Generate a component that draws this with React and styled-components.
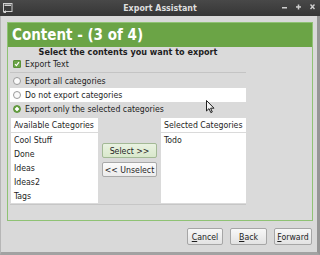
import React from 'react';
import styled, { createGlobalStyle, css } from 'styled-components';

const Global = createGlobalStyle`
  html, body {
    margin: 0;
    padding: 0;
    background: #d9d9d9;
    overflow: hidden;
  }
  body {
    font-family: "DejaVu Sans Condensed", "DejaVu Sans", sans-serif;
    font-stretch: condensed;
    font-size: 8.7px;
    color: #1e1e1e;
  }
`;

const Window = styled.div`
  position: relative;
  width: 320px;
  height: 255px;
  display: flex;
  flex-direction: column;
  background: #d9d9d9;
`;

const TitleBar = styled.div`
  position: relative;
  height: 16px;
  flex: none;
  display: flex;
  align-items: center;
  justify-content: center;
  background: linear-gradient(#484848, #363636);
  color: #dedede;
  font-weight: bold;
  font-size: 8.8px;
`;

const WinIcon = styled.svg`
  position: absolute;
  left: 3px;
  top: 3px;
`;

const Controls = styled.div`
  position: absolute;
  right: 5px;
  top: 4px;
  display: flex;
  gap: 9px;
`;

const Frame = styled.div`
  flex: 1;
  display: flex;
  flex-direction: column;
  padding: 6px 5px 0 6px;
  border-left: 1px solid #b6b6b6;
  border-right: 3px solid #959595;
  border-bottom: 3px solid #a2a2a2;
`;

const Panel = styled.div`
  width: 306px;
  height: 199px;
  box-sizing: border-box;
  border: 1px solid #8fc274;
  background: #dadada;
  display: flex;
  flex-direction: column;
`;

const Header = styled.div`
  height: 24px;
  line-height: 24px;
  background: #6ba446;
  color: #fff;
  font-weight: bold;
  font-size: 15px;
  padding-left: 4px;
`;

const Content = styled.div`
  width: 236px;
  margin-left: 2px;
  display: flex;
  flex-direction: column;
`;

const Heading = styled.div`
  height: 10px;
  line-height: 10px;
  text-align: center;
  font-weight: bold;
  font-size: 9px;
`;

const OptionRow = styled.div`
  height: 14px;
  display: flex;
  align-items: center;
  gap: 4px;
  padding-left: 3px;
  ${(p) =>
    p.hover &&
    css`
      background: #ffffff;
    `}
`;

const Check = styled.span`
  width: 8px;
  height: 8px;
  border-radius: 1px;
  background: #6ba446;
  border: 1px solid #5a9238;
  box-sizing: border-box;
  display: flex;
  align-items: center;
  justify-content: center;
`;

const Radio = styled.span`
  width: 8px;
  height: 8px;
  border-radius: 50%;
  box-sizing: border-box;
  border: 1px solid #9a9a9a;
  background: #fafafa;
  ${(p) =>
    p.checked &&
    css`
      border-color: #5a9238;
      background: radial-gradient(circle, #ffffff 0 1.5px, #6ba446 2px);
    `}
`;

const Separator = styled.div`
  height: 1px;
  margin: 1px 0 1px;
  background: #c4c4c4;
`;

const ListsRow = styled.div`
  margin-top: 2px;
  padding-bottom: 1px;
  display: flex;
  gap: 4px;
  align-items: flex-start;
  border-bottom: 1px solid #c6c6c6;
`;

const ListColumn = styled.div`
  width: ${(p) => p.w}px;
  margin-left: ${(p) => p.ml || 0}px;
  display: flex;
  flex-direction: column;
  gap: 1px;
`;

const ListHead = styled.div`
  height: 14px;
  line-height: 14px;
  background: #fff;
  padding-left: 3px;
`;

const ListBox = styled.div`
  height: 70px;
  background: #fff;
`;

const ListItem = styled.div`
  height: 14px;
  line-height: 14px;
  padding-left: 3px;
`;

const MoveButtons = styled.div`
  width: 55px;
  padding-top: 25px;
  display: flex;
  flex-direction: column;
  gap: 4px;
`;

const SmallButton = styled.div`
  height: 15px;
  box-sizing: border-box;
  display: flex;
  align-items: center;
  justify-content: center;
  border: 1px solid #a9a9a9;
  border-radius: 2px;
  background: linear-gradient(#fbfbfb, #ececec);
  ${(p) =>
    p.primary &&
    css`
      border-color: #a3b996;
      background: linear-gradient(#e9f2e1, #d9e8cc);
    `}
`;

const ButtonRow = styled.div`
  margin-top: 7px;
  display: flex;
  justify-content: flex-end;
  gap: 7px;
`;

const Button = styled.div`
  width: ${(p) => p.w}px;
  height: 17px;
  box-sizing: border-box;
  display: flex;
  align-items: center;
  justify-content: center;
  border: 1px solid #a6a6a6;
  border-radius: 2px;
  background: linear-gradient(#f8f8f8, #e2e2e2);

  u {
    text-decoration: underline;
    text-underline-offset: 1px;
  }
`;

const Cursor = styled.svg`
  position: absolute;
  left: 206px;
  top: 100px;
`;

export default function App() {
  const available = ['Cool Stuff', 'Done', 'Ideas', 'Ideas2', 'Tags'];
  const selected = ['Todo'];

  return (
    <Window>
      <Global />
      <TitleBar>
        <WinIcon width="10" height="10" viewBox="0 0 10 10">
          <rect x="0.5" y="0.5" width="8.5" height="8" fill="#3a3a3a" stroke="#cfcfcf" />
          <rect x="1.5" y="1.5" width="6.5" height="1.5" fill="#cfcfcf" />
          <path d="M0 10 L3 7 L3 10 Z" fill="#cfcfcf" />
        </WinIcon>
        Export Assistant
        <Controls>
          <svg width="5" height="6" viewBox="0 0 5 6">
            <rect x="0" y="3" width="5" height="1.5" fill="#cfcfcf" />
          </svg>
          <svg width="5" height="6" viewBox="0 0 5 6">
            <rect x="0" y="2.2" width="5" height="1.5" fill="#cfcfcf" />
            <rect x="1.75" y="0.5" width="1.5" height="5" fill="#cfcfcf" />
          </svg>
          <svg width="5" height="6" viewBox="0 0 5 6">
            <path d="M0.5 0.5 L4.5 5 M4.5 0.5 L0.5 5" stroke="#cfcfcf" strokeWidth="1.4" />
          </svg>
        </Controls>
      </TitleBar>

      <Frame>
        <Panel>
          <Header>Content - (3 of 4)</Header>
          <Content>
            <Heading>Select the contents you want to export</Heading>
            <OptionRow>
              <Check>
                <svg width="6" height="6" viewBox="0 0 6 6">
                  <path d="M1 3.2 L2.4 4.6 L5 1.2" stroke="#fff" strokeWidth="1.2" fill="none" />
                </svg>
              </Check>
              Export Text
            </OptionRow>
            <Separator />
            <OptionRow>
              <Radio />
              Export all categories
            </OptionRow>
            <OptionRow hover>
              <Radio />
              Do not export categories
            </OptionRow>
            <OptionRow>
              <Radio checked />
              Export only the selected categories
            </OptionRow>

            <ListsRow>
              <ListColumn w={87} ml={1}>
                <ListHead>Available Categories</ListHead>
                <ListBox>
                  {available.map((name) => (
                    <ListItem key={name}>{name}</ListItem>
                  ))}
                </ListBox>
              </ListColumn>
              <MoveButtons>
                <SmallButton primary>Select &gt;&gt;</SmallButton>
                <SmallButton>&lt;&lt; Unselect</SmallButton>
              </MoveButtons>
              <ListColumn w={85}>
                <ListHead>Selected Categories</ListHead>
                <ListBox>
                  {selected.map((name) => (
                    <ListItem key={name}>{name}</ListItem>
                  ))}
                </ListBox>
              </ListColumn>
            </ListsRow>
          </Content>
        </Panel>

        <ButtonRow>
          <Button w={36}>
            <span><u>C</u>ancel</span>
          </Button>
          <Button w={37}>
            <span><u>B</u>ack</span>
          </Button>
          <Button w={38}>
            <span><u>F</u>orward</span>
          </Button>
        </ButtonRow>
      </Frame>

      <Cursor width="9" height="14" viewBox="0 0 9 14">
        <path d="M0.5 0.5 L0.5 11 L3 8.6 L4.8 12.6 L6.3 12 L4.6 8.2 L8 8.2 Z" fill="#f4f4f4" stroke="#222" strokeWidth="1" strokeLinejoin="round" />
      </Cursor>
    </Window>
  );
}
